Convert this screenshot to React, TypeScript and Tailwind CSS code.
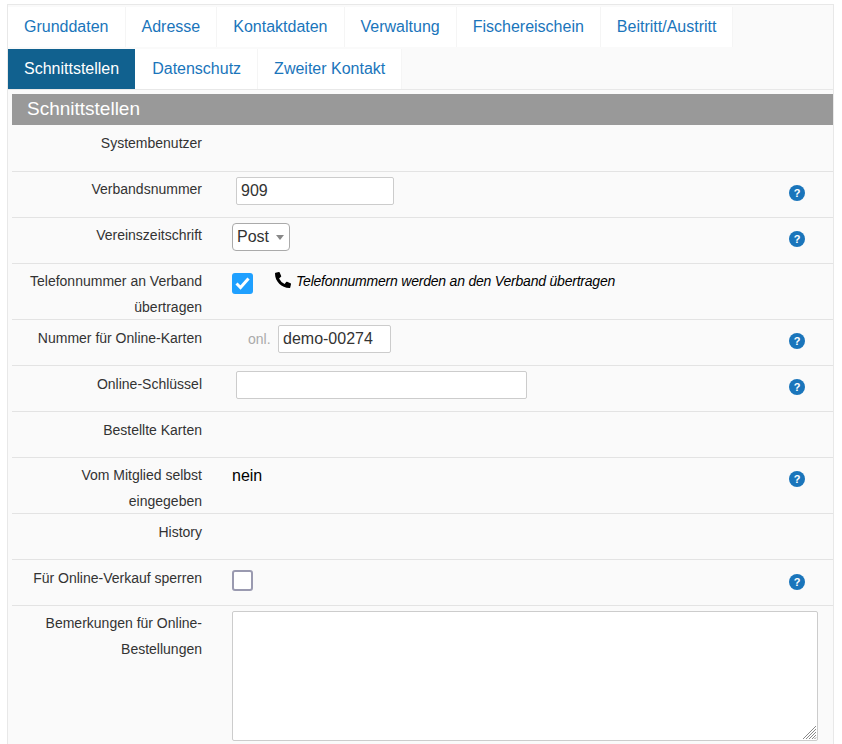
import React from "react";
import { FaPhoneAlt } from "react-icons/fa";

const topTabs = ["Grunddaten", "Adresse", "Kontaktdaten", "Verwaltung", "Fischereischein", "Beitritt/Austritt"];
const subTabs = ["Schnittstellen", "Datenschutz", "Zweiter Kontakt"];

const Tab = ({ label, active }: { label: string; active?: boolean }) => (
  <a
    className={
      active
        ? "h-[40px] px-4 flex items-center bg-[#11618f] text-white border-r border-white"
        : "h-[40px] px-4 flex items-center bg-white text-[#1a75bb] border-r border-[#f5f5f5]"
    }
    href="#"
  >
    {label}
  </a>
);

type RowProps = {
  label: React.ReactNode;
  height?: string;
  labelPad?: string;
  helpTop?: string;
  help?: boolean;
  children?: React.ReactNode;
};

const Row = ({
  label,
  height = "h-[46px]",
  labelPad = "pt-[5px]",
  helpTop = "top-[13px]",
  help,
  children,
}: RowProps) => (
  <div className={`relative flex border-b border-[#e3e3e3] ${height}`}>
    <div className={`w-[190px] text-right text-[14px] leading-[26px] text-[#333] ${labelPad}`}>{label}</div>
    <div className="flex-1 pl-[30px]">{children}</div>
    {help && (
      <div
        className={`absolute right-[28px] w-4 h-4 rounded-full bg-[#1a75bb] text-white text-[11px] leading-4 font-bold text-center ${helpTop}`}
      >
        ?
      </div>
    )}
  </div>
);

const inputCls =
  "h-[28px] bg-white border border-[#ccc] rounded-[2px] px-1 text-[16px] text-[#333] outline-none";

export default function App() {
  return (
    <div className="w-[842px] h-[744px] overflow-hidden bg-white font-['Liberation_Sans',Arial,sans-serif]">
      <div className="ml-[7px] mt-[4px] w-[827px] h-[740px] border-l border-t border-r border-[#e8e8e8] bg-[#fafafa] pt-[2px]">
        <div className="flex text-[16px]">
          {topTabs.map((t) => (
            <Tab key={t} label={t} />
          ))}
        </div>
        <div className="flex text-[16px] mt-[2px] border-b border-[#e8e8e8]">
          {subTabs.map((t, i) => (
            <Tab key={t} label={t} active={i === 0} />
          ))}
        </div>
        <div className="pl-1 mt-1">
          <div className="h-[31px] bg-[#999] pl-[15px] text-[19px] leading-[29px] text-white">Schnittstellen</div>

          <Row label="Systembenutzer" height="h-[47px]" />
          <Row label="Verbandsnummer" labelPad="pt-[4px]" help>
            <input className={`${inputCls} w-[158px] ml-1 mt-[5px]`} defaultValue="909" />
          </Row>
          <Row label="Vereinszeitschrift" labelPad="pt-[4px]" help>
            <div className="relative w-[58px] mt-[5px]">
              <select className="appearance-none w-full h-[28px] bg-white border border-[#aaa] rounded-[4px] pl-1 text-[16px] text-[#333] outline-none">
                <option>Post</option>
              </select>
              <span className="absolute right-[6px] top-[12px] w-0 h-0 border-x-[4px] border-x-transparent border-t-[5px] border-t-[#888]" />
            </div>
          </Row>
          <Row
            label={
              <>
                Telefonnummer an Verband
                <br />
                übertragen
              </>
            }
            height="h-[56px]"
            labelPad="pt-[4px]"
          >
            <div className="flex items-start">
              <div className="mt-[9px] w-[21px] h-[21px] rounded-[3px] bg-[#1fa0ff] flex items-center justify-center">
                <svg width="15" height="13" viewBox="0 0 15 13" fill="none">
                  <path d="M1.5 6.5 L5.5 10.5 L13.5 1.5" stroke="#fff" strokeWidth="3" />
                </svg>
              </div>
              <FaPhoneAlt size={16} className="ml-[22px] mt-[8px] text-black" />
              <span className="ml-[5px] mt-[4px] text-[14px] leading-[26px] italic tracking-[-0.21px] text-black">
                Telefonnummern werden an den Verband übertragen
              </span>
            </div>
          </Row>
          <Row label="Nummer für Online-Karten" help>
            <div className="flex items-center mt-[5px]">
              <span className="ml-[16px] w-[30px] text-[14px] text-[#aaa]">onl.</span>
              <input className={`${inputCls} w-[113px]`} defaultValue="demo-00274" />
            </div>
          </Row>
          <Row label="Online-Schlüssel" help>
            <input className={`${inputCls} w-[291px] ml-1 mt-[5px]`} />
          </Row>
          <Row label="Bestellte Karten" />
          <Row
            label={
              <>
                Vom Mitglied selbst
                <br />
                eingegeben
              </>
            }
            height="h-[56px]"
            labelPad="pt-[4px]"
            help
          >
            <div className="pt-[5px] text-[16px] leading-[26px] text-black">nein</div>
          </Row>
          <Row label="History" />
          <Row label="Für Online-Verkauf sperren" helpTop="top-[14px]" help>
            <div className="mt-[10px] w-[21px] h-[21px] rounded-[3px] bg-white border-2 border-[#9a9ab0]" />
          </Row>
          <div className="flex">
            <div className="w-[190px] pt-[4px] text-right text-[14px] leading-[26px] text-[#333]">
              Bemerkungen für Online-
              <br />
              Bestellungen
            </div>
            <div className="flex-1 pl-[30px] pt-[5px]">
              <div className="relative w-[586px]">
                <textarea className="block w-full h-[130px] resize-none bg-white border border-[#ccc] rounded-[2px] outline-none" />
                <svg
                  className="absolute right-[1px] bottom-[1px] pointer-events-none"
                  width="16"
                  height="16"
                  viewBox="0 0 16 16"
                  stroke="#8a8a8a"
                  strokeWidth="1"
                >
                  <path d="M2 15 L15 2 M5 15 L15 5 M8 15 L15 8 M11 15 L15 11 M13.5 15 L15 13.5" />
                </svg>
              </div>
            </div>
          </div>
        </div>
      </div>
    </div>
  );
}
